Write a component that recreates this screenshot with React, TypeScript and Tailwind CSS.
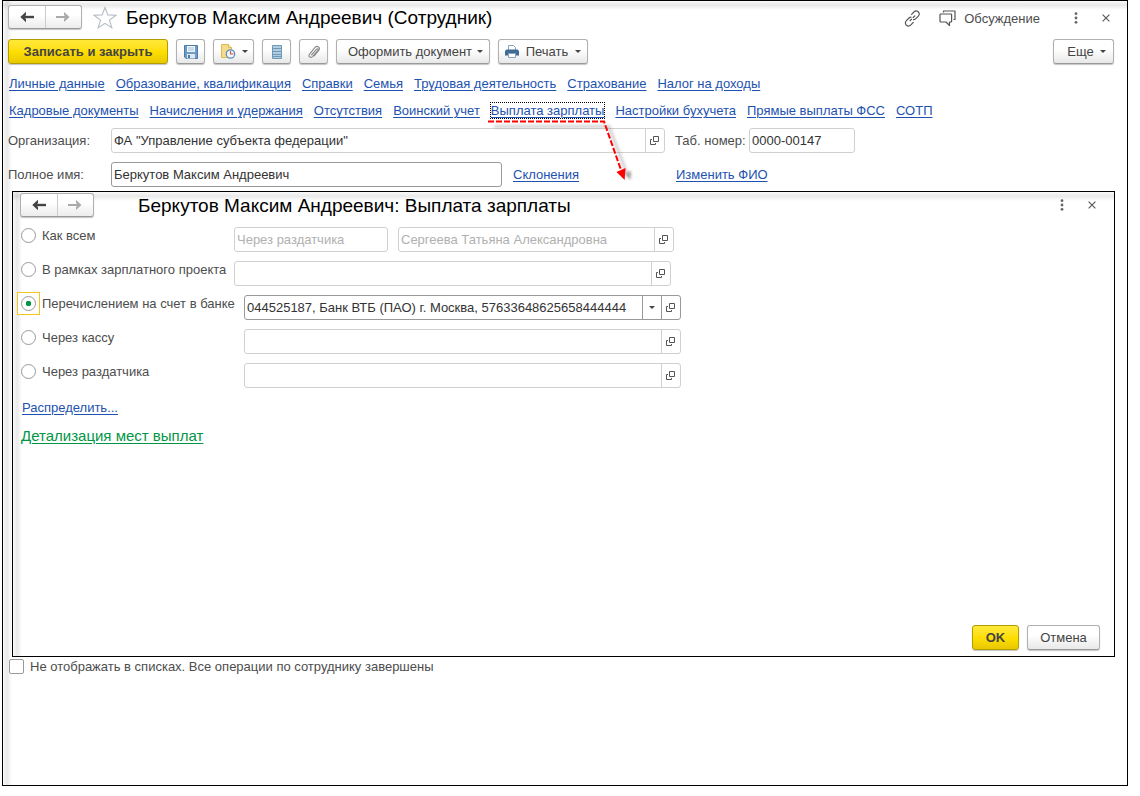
import type { ReactNode } from "react";

const linkRows = [
  ["Личные данные", "Образование, квалификация", "Справки", "Семья", "Трудовая деятельность", "Страхование", "Налог на доходы"],
  ["Кадровые документы", "Начисления и удержания", "Отсутствия", "Воинский учет", "Выплата зарплаты", "Настройки бухучета", "Прямые выплаты ФСС", "СОТП"],
];

const frame =
  "border border-black bg-white bg-[linear-gradient(to_right,#fafafa,#e9e9e9_4px,#ffffff_9px),linear-gradient(to_bottom,#fafafa,#e9e9e9_4px,#ffffff_9px)] bg-blend-multiply";
const grayButton =
  "flex h-[25px] shrink-0 items-center justify-center rounded-[3px] border border-[#b0b0b0] border-b-[#999] bg-gradient-to-b from-white from-40% to-[#e8e8e8] text-[#444] shadow-[0_1px_1px_#c4c4c4]";
const yellowButton =
  "flex h-[25px] shrink-0 items-center justify-center rounded-[3px] border border-[#b39b00] bg-gradient-to-b from-[#ffe838] via-[#ffdf00] to-[#e8c800] font-bold text-[#444] shadow-[0_1px_1px_#c4c4c4]";
const linkStyle = "text-[#1d52b0] underline decoration-1 underline-offset-2";

function Caret() {
  return (
    <svg width="6" height="3" viewBox="0 0 6 3" aria-hidden="true">
      <path d="M0 0h6L3 3z" fill="#444" />
    </svg>
  );
}

function ArrowIcon({ right }: { right?: boolean }) {
  return right ? (
    <svg width="14" height="12" viewBox="0 0 14 12" aria-hidden="true">
      <path d="M0 6h11" stroke="#aaa" strokeWidth="2" />
      <path d="M8 1l5.500 5L8 11V8l2-2-2-2z" fill="#aaa" />
    </svg>
  ) : (
    <svg width="14" height="12" viewBox="0 0 14 12" aria-hidden="true">
      <path d="M3 6h11" stroke="#444" strokeWidth="2.400" />
      <path d="M6 .8L.3 6 6 11.200V8L4 6l2-2z" fill="#444" />
    </svg>
  );
}

function NavButtons() {
  return (
    <div className="flex h-6 w-[74px] shrink-0 rounded-[3px] border border-[#b0b0b0] border-b-[#999] bg-gradient-to-b from-white from-40% to-[#ececec] shadow-[0_1px_1px_#c4c4c4]">
      <button type="button" aria-label="Назад" className="flex flex-1 items-center justify-center border-r border-[#ccc]">
        <ArrowIcon />
      </button>
      <button type="button" aria-label="Вперед" className="flex flex-1 items-center justify-center">
        <ArrowIcon right />
      </button>
    </div>
  );
}

function WindowControls({ className }: { className: string }) {
  return (
    <div className={"flex items-center gap-[14px] " + className}>
      <button type="button" aria-label="Меню" className="flex w-4 justify-center">
        <svg width="4" height="12" viewBox="0 0 4 12" fill="#666" aria-hidden="true">
          <circle cx="2" cy="1.700" r="1.400" />
          <circle cx="2" cy="6" r="1.400" />
          <circle cx="2" cy="10.300" r="1.400" />
        </svg>
      </button>
      <button type="button" aria-label="Закрыть" className="flex w-4 justify-center">
        <svg width="8" height="8" viewBox="0 0 8 8" stroke="#555" strokeWidth="1.100" aria-hidden="true">
          <path d="M.6.6l6.800 6.800M7.400.6L.6 7.400" />
        </svg>
      </button>
    </div>
  );
}

function OpenIcon() {
  return (
    <svg width="9" height="9" viewBox="0 0 9 9" fill="none" stroke="#555" aria-hidden="true">
      <path d="M3.500.5h5v5h-5zM2 3.500H.5v5h5V7" />
    </svg>
  );
}

type FieldProps = {
  label: string;
  value?: string;
  className: string;
  active?: boolean;
  disabled?: boolean;
  open?: boolean;
  drop?: boolean;
};

function Field({ label, value = "", className, active, disabled, open, drop }: FieldProps) {
  const line = active ? "border-[#999]" : "border-[#d0d0d0]";
  return (
    <div className={"flex h-[25px] min-w-0 rounded-[3px] border bg-white " + line + " " + className}>
      <input
        type="text"
        aria-label={label}
        defaultValue={value}
        disabled={disabled}
        className="min-w-0 flex-1 bg-transparent px-[2px] text-[#333] outline-none disabled:text-[#b0b0b0]"
      />
      {drop && (
        <button type="button" aria-label="Выбрать" className={"flex w-[19px] items-center justify-center border-l " + line}>
          <Caret />
        </button>
      )}
      {open && (
        <button type="button" aria-label="Открыть" className={"flex w-[19px] items-center justify-center border-l pr-px " + line}>
          <OpenIcon />
        </button>
      )}
    </div>
  );
}

function PayRow({ label, wide, checked, children }: { label: string; wide?: boolean; checked?: boolean; children: ReactNode }) {
  return (
    <div className="flex items-start">
      <label className={"flex h-[17px] shrink-0 items-center gap-[2px] whitespace-nowrap " + (wide ? "w-[227px]" : "w-[217px]")}>
        <span className="flex size-[23px] shrink-0 items-center justify-center border border-transparent has-checked:border-[#f5c518] has-checked:bg-white">
          <input
            type="radio"
            name="pay"
            defaultChecked={checked}
            className="size-[15px] appearance-none rounded-full border border-[#999] bg-white checked:bg-[radial-gradient(circle,#009646_2.5px,#ffffff_3px)]"
          />
        </span>
        {label}
      </label>
      {children}
    </div>
  );
}

function CalloutArrow() {
  return (
    <svg className="pointer-events-none absolute -left-[3px] top-3 z-10 overflow-visible" width="150" height="72" viewBox="0 0 150 72" aria-hidden="true">
      <defs>
        <filter id="soft" filterUnits="userSpaceOnUse" x="-5" y="0" width="160" height="80">
          <feGaussianBlur stdDeviation="1.700" />
        </filter>
      </defs>
      <g filter="url(#soft)" opacity="0.4">
        <path d="M6 12.500H121L139 60" fill="none" stroke="#777" strokeWidth="2.500" />
        <path d="M136 59l7-2-.5 9z" fill="#000" />
      </g>
      <path d="M0 7.500H116L133 56" fill="none" stroke="#f00" strokeWidth="2" strokeDasharray="6 2" />
      <path d="M128.500 58l9-4-.8 12z" fill="#f00" />
    </svg>
  );
}

export default function App() {
  return (
    <div className="flex min-h-screen flex-col bg-white pb-[10px] pl-[2px] pr-3 font-['Liberation_Sans',Arial,sans-serif] text-[13px] leading-[17px] text-[#4d4d4d]">
      <main className={"flex-1 pl-[5px] pr-[13px] pt-1 " + frame}>
        <header className="flex h-6 items-center">
          <NavButtons />
          <button type="button" aria-label="В избранное" className="ml-[11px] shrink-0">
            <svg width="24" height="23" viewBox="0 0 24 23" fill="#fff" stroke="#b4bcc6" strokeWidth="1.100" aria-hidden="true">
              <path d="M12 1.500l2.800 7.400 8.200.3-6.500 4.900 2.300 7.600L12 17.300l-6.800 4.400 2.300-7.600L1 9.200l8.200-.3z" />
            </svg>
          </button>
          <h1 className="ml-[9px] whitespace-nowrap pt-[2px] text-[19px] leading-6 text-black">Беркутов Максим Андреевич (Сотрудник)</h1>
          <div className="ml-auto flex items-center pt-[2px]">
            <button type="button" aria-label="Ссылка">
              <svg width="17" height="17" viewBox="0 0 17 17" fill="none" stroke="#555" strokeWidth="1.200" strokeLinecap="round" aria-hidden="true">
                <path d="M7.600 4.300l2.300-2.300c1.300-1.300 3.100-1.300 4.300-.3 1.300 1.200 1.400 3 .1 4.400l-2.700 2.700c-.6.600-1.300.900-2 .9M6.200 10.500l1.400-1.400M9.200 7.500l1.600-1.600M9.300 12.400l-2.400 2.500c-1.300 1.300-3.200 1.400-4.500.3-1.400-1.300-1.300-3.200 0-4.500L5 8c.6-.6 1.300-.9 2-.9" />
              </svg>
            </button>
            <button type="button" className="ml-[18px] flex items-center gap-2">
              <svg width="17" height="17" viewBox="0 0 17 17" fill="none" stroke="#555" strokeWidth="1.200" strokeLinejoin="round" aria-hidden="true">
                <path d="M4.500 2.500V1h11.500v8.500h-1.500M1.600 4H12l.6.6v6.800l-.6.6h-1.500v3.500L7 12H1.600l-.6-.6V4.600z" />
              </svg>
              Обсуждение
            </button>
            <WindowControls className="ml-7" />
          </div>
        </header>

        <div className="mt-[10px] flex gap-2">
          <button type="button" className={"w-40 " + yellowButton}>Записать и закрыть</button>
          <button type="button" aria-label="Записать" className={"w-[29px] " + grayButton}>
            <svg width="14" height="14" viewBox="0 0 14 14" aria-hidden="true">
              <path d="M.5.5h13v13H2L.5 12z" fill="#6f9bc4" stroke="#4d7aa8" />
              <path d="M3 1h8v6H3z" fill="#eef4fa" />
              <path d="M4 3h6M4 5h6" stroke="#a9c1d8" />
              <path d="M3 9h8v4.500H3z" fill="#dfe8f1" />
              <path d="M4 10h2v3H4z" fill="#4d7aa8" />
            </svg>
          </button>
          <button type="button" aria-label="Создать на основании" className={"w-[41px] gap-[6px] " + grayButton}>
            <svg width="16" height="15" viewBox="0 0 16 15" aria-hidden="true">
              <path d="M1.500.5h7l3 3v10h-10z" fill="#f5dc8a" stroke="#dcb857" />
              <path d="M8.500.5v3h3" fill="#fff3c0" stroke="#dcb857" />
              <circle cx="10.500" cy="10" r="4.200" fill="#f4f8fc" stroke="#5f8fc0" strokeWidth="1.300" />
              <path d="M10.500 7v3h3" fill="none" stroke="#c9574f" strokeWidth="1.200" />
            </svg>
            <Caret />
          </button>
          <button type="button" aria-label="Список" className={"w-[29px] " + grayButton}>
            <svg width="10" height="14" viewBox="0 0 10 14" aria-hidden="true">
              <path d="M.5.5h9v13h-9z" fill="#b3cde0" stroke="#6d98b8" />
              <path d="M1 3.500h8M1 6.500h8M1 9.500h8M1 11.500h8" stroke="#6d98b8" />
            </svg>
          </button>
          <button type="button" aria-label="Файлы" className={"w-[29px] " + grayButton}>
            <svg width="14" height="14" viewBox="0 0 14 14" fill="none" stroke="#888" strokeWidth="1.100" strokeLinecap="round" aria-hidden="true">
              <path d="M4.600 9.800l5-5.600c1-1 2.200 0 1.300 1.200l-5.400 6.200c-2 1.900-4.600-.2-2.900-2.500L8 2.400c2.500-2.400 5.700.4 3.700 3.100L7.200 11" />
            </svg>
          </button>
          <button type="button" className={"w-[154px] gap-[5px] pl-[5px] " + grayButton}>
            Оформить документ <Caret />
          </button>
          <button type="button" className={"w-[90px] gap-[7px] " + grayButton}>
            <svg width="14" height="13" viewBox="0 0 14 13" aria-hidden="true">
              <path d="M3.500 5V.5h5l2 2V5" fill="#fff" stroke="#8ba3ba" />
              <path d="M1.500 4.500h11L14 6v4.500H0V6z" fill="#3f6b95" />
              <path d="M3.500 8.500h7v4h-7z" fill="#fff" stroke="#8ba3ba" />
            </svg>
            Печать
            <Caret />
          </button>
          <button type="button" className={"ml-auto w-[61px] gap-[6px] pl-[6px] " + grayButton}>
            Еще <Caret />
          </button>
        </div>

        <nav className="mt-[11px] flex flex-col gap-[10px] pl-px">
          {linkRows.map((row, i) => (
            <div key={i} className="flex gap-[11px] whitespace-nowrap">
              {row.map((name) =>
                name === "Выплата зарплаты" ? (
                  <span key={name} className="relative">
                    <a href="#pay" className={"outline-1 outline-dotted outline-black " + linkStyle}>{name}</a>
                    <CalloutArrow />
                  </span>
                ) : (
                  <a key={name} href="#section" className={linkStyle}>{name}</a>
                ),
              )}
            </div>
          ))}
        </nav>

        <div className="mt-[9px] flex items-center">
          <span className="w-[103px] shrink-0">Организация:</span>
          <Field label="Организация" value={'ФА "Управление субъекта федерации"'} className="w-[554px]" open />
          <span className="ml-[10px] w-[74px] shrink-0 whitespace-nowrap">Таб. номер:</span>
          <Field label="Таб. номер" value="0000-00147" className="w-[106px]" />
        </div>
        <div className="mt-[9px] flex items-center">
          <span className="w-[103px] shrink-0">Полное имя:</span>
          <Field label="Полное имя" value="Беркутов Максим Андреевич" className="w-[391px]" active />
          <span className="ml-[11px] w-[163px]">
            <a href="#cases" className={linkStyle}>Склонения</a>
          </span>
          <a href="#rename" className={linkStyle}>Изменить ФИО</a>
        </div>

        <section id="pay" className={"-mr-px ml-1 mt-1 pb-[6px] pl-[7px] pr-[14px] pt-px " + frame}>
          <div className="flex h-6 items-center">
            <NavButtons />
            <h2 className="ml-11 whitespace-nowrap pt-[2px] text-[19px] leading-6 text-black">Беркутов Максим Андреевич: Выплата зарплаты</h2>
            <WindowControls className="ml-auto" />
          </div>
          <div className="-ml-[3px] mt-[10px] flex flex-col gap-[9px]">
            <PayRow label="Как всем">
              <Field label="Способ выплаты" value="Через раздатчика" className="w-[154px]" disabled />
              <Field label="Раздатчик" value="Сергеева Татьяна Александровна" className="ml-[10px] w-[276px]" disabled open />
            </PayRow>
            <PayRow label="В рамках зарплатного проекта">
              <Field label="Зарплатный проект" className="w-[437px]" open />
            </PayRow>
            <PayRow label="Перечислением на счет в банке" wide checked>
              <Field label="Банковский счет" value="044525187, Банк ВТБ (ПАО) г. Москва, 57633648625658444444" className="w-[437px]" active drop open />
            </PayRow>
            <PayRow label="Через кассу" wide>
              <Field label="Касса" className="w-[437px]" open />
            </PayRow>
            <PayRow label="Через раздатчика" wide>
              <Field label="Раздатчик для выплаты" className="w-[437px]" open />
            </PayRow>
          </div>
          <div className="mt-[11px] pl-[2px]">
            <a href="#split" className={linkStyle}>Распределить...</a>
          </div>
          <div className="mt-[10px] pl-px text-[15px] leading-5">
            <a href="#details" className="text-[#009646] underline decoration-1 underline-offset-2">Детализация мест выплат</a>
          </div>
          <div className="mt-[179px] flex justify-end gap-2">
            <button type="button" className={"w-[47px] " + yellowButton}>OK</button>
            <button type="button" className={"w-[73px] " + grayButton}>Отмена</button>
          </div>
        </section>

        <label className="mt-px flex items-center gap-[6px] pl-px">
          <input type="checkbox" className="size-[15px] shrink-0 appearance-none rounded-[2px] border border-[#999] bg-white" />
          Не отображать в списках. Все операции по сотруднику завершены
        </label>
      </main>
    </div>
  );
}
